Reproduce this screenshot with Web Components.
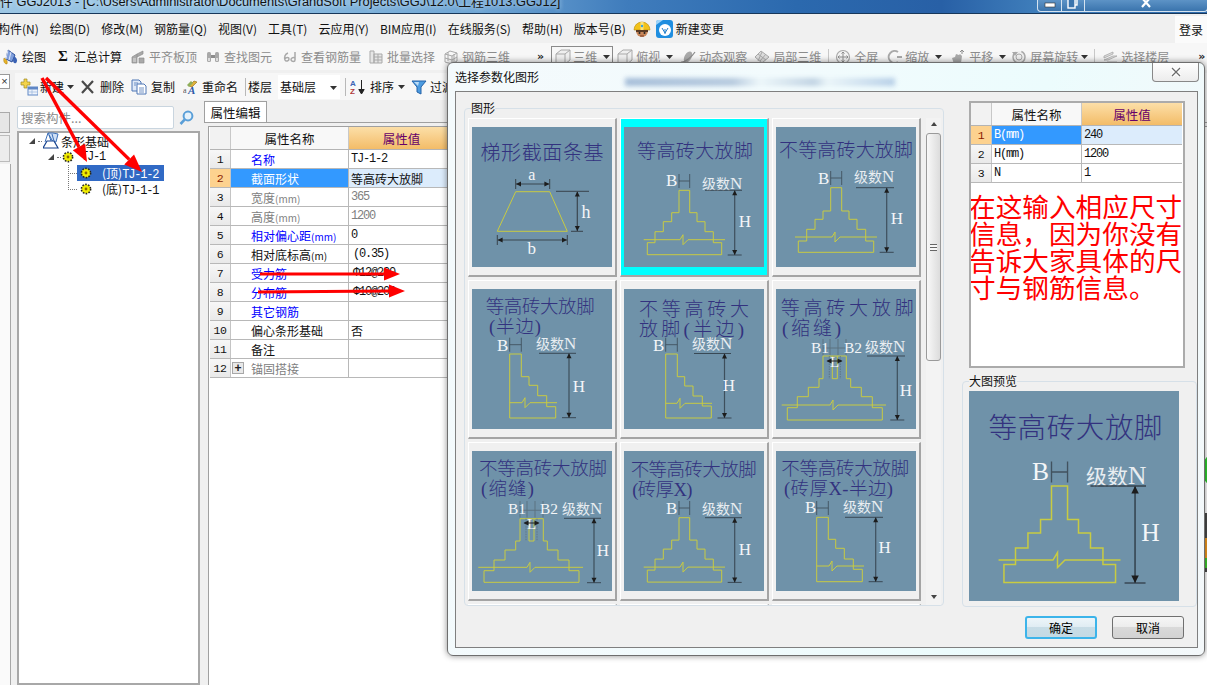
<!DOCTYPE html>
<html lang="zh"><head><meta charset="utf-8"><title>GGJ2013</title>
<style>
html,body{margin:0;padding:0;background:#fff}
body{width:1207px;height:685px;overflow:hidden;position:relative;display:flex;flex-direction:column;font:12px "Noto Sans CJK SC","Noto Sans",sans-serif;color:#111}
</style></head><body>
<gd-titlebar>件 GGJ2013 - [C:\Users\Administrator\Documents\GrandSoft Projects\GGJ\12.0\工程1013.GGJ12]</gd-titlebar>
<gd-menubar></gd-menubar>
<gd-toolbar1></gd-toolbar1>
<gd-workspace></gd-workspace>
<gd-annotations></gd-annotations>
<gd-dialog></gd-dialog>
<script>
const SANS='"Noto Sans CJK SC","Noto Sans",sans-serif';
const MONO='"Liberation Mono","Noto Sans CJK SC",monospace';
const SERIF='"Liberation Serif","Noto Sans CJK SC",serif';
const svg=(b,s=16)=>`<svg width="${s}" height="${s}" viewBox="0 0 16 16" aria-hidden="true">${b}</svg>`;
const G='#a9a9a9',GD='#8d8d8d';
const ICONS={
 draw:svg(`<path d="M5 1l7 5-3 7-6-3z" fill="#7f9fdc" stroke="#2c4f9a"/><path d="M5 1L3 10M8 3l-2 8" stroke="#dfe8fa" fill="none"/><path d="M11 7c3 2 4 5 2 7-2 1-3-1-3-3z" fill="#3a62b4"/><path d="M1 9c2 1 4 3 3 6-2 0-4-2-3-6z" fill="#e9b428" stroke="#a57a10" stroke-width=".5"/>`),
 level:svg(`<path d="M2 8l5-3v9H2zM7 5l6-3v3l-6 3M9 9h5v5H9z" fill="${G}" stroke="${GD}" stroke-width=".7"/><path d="M3 10h3M3 12h3" stroke="#ddd"/>`),
 find:svg(`<rect x="2" y="3" width="4" height="10" rx="1.5" fill="${G}"/><rect x="10" y="3" width="4" height="10" rx="1.5" fill="${G}"/><rect x="6" y="6" width="4" height="3" fill="${GD}"/><rect x="3" y="9" width="2" height="3" fill="#ddd"/><rect x="11" y="9" width="2" height="3" fill="#ddd"/>`),
 rebar:svg(`<path d="M6 4C3 5 2 8 3 11c1 2 4 1 4-1s-3-2-4 0M13 3v8c0 2-3 2-4 0 0-2 2-3 4-2" fill="none" stroke="${G}" stroke-width="1.5"/>`),
 batch:svg(`<path d="M2 2h4v12H2zM6 5h8v9H6zM6 8h8M6 11h8M10 5v9" fill="#e6e6e6" stroke="${G}"/>`),
 bar3d:svg(`<path d="M2 5l5-3 7 2v8l-5 3-7-2zM2 5l7 2v8M9 7l5-3M5 3v9M11 5v9M2 9l7 2 5-3" fill="none" stroke="${G}"/>`),
 cube:svg(`<path d="M1 5l5-4h9v10l-5 4H1zM1 5h9v10M10 5l5-4" fill="#efefef" stroke="${G}"/>`),
 orbit:svg(`<ellipse cx="8" cy="8" rx="3.5" ry="6" fill="${G}" transform="rotate(30 8 8)"/><path d="M1 13c3 1 11-5 14-10" fill="none" stroke="${GD}" stroke-width="1.2"/>`),
 local:svg(`<path d="M1 8l6-6 8 6-7 6zM4 5l8 6M8 3l-4 9M12 5l-6 7" fill="#dcdcdc" stroke="${G}"/>`),
 full:svg(`<circle cx="8" cy="8" r="6.5" fill="#f4f4f4" stroke="${G}" stroke-width="1.2"/><path d="M8 3v10M3 8h10M6.5 4.5L8 3l1.5 1.5M6.5 11.5L8 13l1.5-1.5M4.5 6.5L3 8l1.5 1.5M11.5 6.5L13 8l-1.5 1.5" fill="none" stroke="${GD}"/>`),
 zoom:svg(`<path d="M12 3a6 6 0 1 0 0 10" fill="none" stroke="${G}" stroke-width="2"/><path d="M11 8h5" stroke="${GD}" stroke-width="1.5"/>`),
 hand:svg(`<path d="M4 15l-2-6 3-1 1-3 3 1 1-1 2 2-1 7z" fill="${G}"/><path d="M10 3l2-2 2 2M12 1v4" fill="none" stroke="${GD}"/>`),
 rotate:svg(`<circle cx="8" cy="8" r="6" fill="#eee" stroke="${G}" stroke-width="1.5" stroke-dasharray="24 6"/><circle cx="8" cy="8" r="3" fill="none" stroke="${G}"/><path d="M1 3l3 4 3-4z" fill="${G}"/>`),
 floor:svg(`<path d="M2 7l9-4v2l-9 4zM2 11l9-4h4l-9 4zM5 13h10" fill="#dedede" stroke="${G}" stroke-width=".8"/>`),
 add:svg(`<path d="M4 0h3v3h3v3H7v3H4V6H1V3h3z" fill="#f4d34a" stroke="#9d8a23" stroke-width=".7"/><rect x="8" y="8" width="10" height="8" fill="#eef3fb" stroke="#5f87c6"/><rect x="8" y="8" width="10" height="2.5" fill="#5f87c6"/><path d="M8 13h10M12 10v6" stroke="#9ab5dc" stroke-width=".7"/>`,18).replace('0 0 16 16','0 0 18 16'),
 del:svg(`<path d="M2 2l11 12M13 2L2 14" stroke="#4a4a4a" stroke-width="2.2" fill="none"/>`),
 copy:svg(`<path d="M1 1h7l2 2v9H1z" fill="#dfe9f7" stroke="#4e76b5"/><path d="M6 5h7l2 2v8H6z" fill="#fff" stroke="#4e76b5"/><path d="M3 4h4M3 6h2M8 9h5M8 11h5M8 13h5" stroke="#4e76b5" stroke-width=".8"/>`),
 ren:svg(`<path d="M6 7l5-5 3 1-5 5z" fill="#e0b23a" stroke="#8a6a14" stroke-width=".6"/><path d="M4 6l4-4 2 2-4 4z" fill="#8fae5b"/><text x="0" y="14" font-size="8" font-family="Liberation Serif" fill="#555">a</text><text x="5" y="15" font-size="11" font-weight="700" font-style="italic" font-family="Liberation Serif" fill="#2f5aa8">A</text>`),
 sort:svg(`<text x="0" y="7" font-size="8" font-weight="700" font-family="Liberation Sans" fill="#3c64b4">A</text><text x="0" y="15" font-size="8" font-weight="700" font-family="Liberation Sans" fill="#b03a3a">Z</text><path d="M11.5 1v12M8.8 10.5l2.7 4.5 2.7-4.5z" fill="#222" stroke="#222"/>`),
 filter:svg(`<path d="M1 2h14L10 8v7l-4-2V8z" fill="#4c9be0" stroke="#2462a8"/><path d="M3 3h5L7 7z" fill="#bcdcf6"/>`)
};
function comp(name,css,render){customElements.define(name,class extends HTMLElement{
 connectedCallback(){if(this.shadowRoot)return;const s=this.attachShadow({mode:'open'});s.innerHTML=`<style>${css}</style>`+render(this);}
});}
const caret=`<svg width="7" height="4" viewBox="0 0 7 4" aria-hidden="true"><path d="M0 0h7L3.5 4z" fill="#333"/></svg>`;

comp('gd-titlebar',`:host{display:flex;height:14px;overflow:hidden;flex:none;box-sizing:border-box;border-bottom:1px solid #17375a;background:linear-gradient(90deg,#9cc6e4 0,#8dbde0 20%,#6fa5d4 40%,#3f7cbc 52%,#2b69ae 66%,#2860a6 78%,#3f7ebb 86%,#2f6cad 100%);justify-content:space-between}
.t{font:12.85px "Liberation Sans","Noto Sans CJK SC",sans-serif;color:#111;white-space:nowrap;line-height:14px;margin-top:-5px;text-shadow:0 0 4px #dff0fb}
.b{display:flex;width:171px;height:12px;border:1px solid #d5e3f0;border-top:0;border-radius:0 0 4px 4px;margin-right:-1px;box-sizing:border-box;background:linear-gradient(#5d93c6,#3a74ad);align-items:flex-start}
.b div{height:11px;border-right:1px solid #d5e3f0;display:flex;justify-content:center;overflow:hidden}
.min{width:23px}.max{width:22px}.cl{flex:1;border:0!important}`,()=>`<span class="t"><slot></slot></span><div class="b"><div class="min"><svg width="12" height="10" aria-hidden="true"><rect x="1" y="3" width="10" height="4" fill="#fff" stroke="#333" stroke-width=".6"/></svg></div><div class="max"><svg width="12" height="10" aria-hidden="true"><rect x="3" y="-3" width="7" height="8" fill="none" stroke="#fff" stroke-width="1.4"/><rect x="1" y="-1" width="7" height="9" fill="#3a74ad" stroke="#fff" stroke-width="1.4"/></svg></div><div class="cl"><svg width="12" height="10" aria-hidden="true"><path d="M2-2l8 9M10-2L2 7" stroke="#fff" stroke-width="2.2"/></svg></div></div>`);

comp('gd-menubar',`:host{display:flex;flex:none;height:29px;background:#f0f0f0;align-items:center;white-space:nowrap;font-size:12px;color:#111;position:relative}
.i{margin-left:11px}.i.f{margin-left:-2px}.g{flex:1}
.login{background:#fbfbfb;height:27px;width:32px;align-self:flex-end;display:flex;align-items:center;justify-content:center;font-size:12px}
svg{display:block}`,()=>{
 const m=['构件(N)','绘图(D)','修改(M)','钢筋量(Q)','视图(V)','工具(T)','云应用(Y)','BIM应用(I)','在线服务(S)','帮助(H)','版本号(B)'];
 return m.map((t,i)=>`<span class="i${i?'':' f'}">${t}</span>`).join('')+
 `<svg style="margin-left:7px" width="18" height="18" viewBox="0 0 18 18" aria-hidden="true"><circle cx="9" cy="11" r="6" fill="#c9875a"/><path d="M1 10a8 8 0 0 1 16 0z" fill="#f2c21a" stroke="#b98a08" stroke-width=".6"/><rect x="7.5" y="2" width="3" height="8" fill="#fbe278"/><circle cx="9" cy="6" r="1.2" fill="#3aa0e0"/><path d="M3 10h12v2H3z" fill="#5a3a24"/><circle cx="6.5" cy="13" r="1" fill="#222"/><circle cx="11.5" cy="13" r="1" fill="#222"/><path d="M7 16h4" stroke="#7a3a24"/></svg>
 <svg style="margin-left:5px" width="17" height="18" viewBox="0 0 17 18" aria-hidden="true"><rect x="0" y="0" width="17" height="18" rx="3" fill="#1f8ee0"/><circle cx="9" cy="10" r="6" fill="#fff"/><path d="M0 5l7-5H2a2 2 0 0 0-2 2z" fill="#9fd4f8"/><path d="M6 8l3 5 3-5M9 9v5" stroke="#1f7cc8" fill="none"/></svg>
 <span style="margin-left:3px">新建变更</span><span class="g"></span><span class="login">登录</span>`;
});

comp('gd-tool',`:host{display:inline-flex;align-items:center;gap:3px;white-space:nowrap;height:18px;flex:none}
:host([disabled]){color:#8c8c8c}
svg{display:block;flex:none}.c{margin-left:var(--cm,3px)}.sum{font:700 15px "Liberation Serif",serif;width:16px;text-align:center}`,h=>{
 const ic=h.getAttribute('icon');
 const icon=ic==='sum'?`<span class="sum">Σ</span>`:(ICONS[ic]||'');
 return icon+`<span>${h.getAttribute('label')||''}</span>`+(h.hasAttribute('caret')?`<span class="c">${caret}</span>`:'');
});

comp('gd-toolbar1',`:host{display:block;flex:none;background:#f7f7f7;font-size:12px;border-bottom:3px solid #f0f0f0;height:27px}
.r{display:flex;align-items:center;height:27px;padding-left:3px;white-space:nowrap}
.more{font:700 11px "DejaVu Sans",sans-serif;color:#222}
.sep{width:1px;height:16px;background:#c8c8c8;flex:none}
.box{width:62px;height:22px;border:1px solid #8a8a8a;box-sizing:border-box;display:flex;align-items:center;gap:2px;padding-left:3px;flex:none;color:#8c8c8c;position:relative}
.box svg{display:block}
.box .k{position:absolute;right:2px;top:8px}`,()=>`<div class="r">
<gd-tool icon="draw" label="绘图"></gd-tool>
<gd-tool icon="sum" label="汇总计算" style="margin-left:9px"></gd-tool>
<gd-tool icon="level" label="平齐板顶" disabled style="margin-left:8px"></gd-tool>
<gd-tool icon="find" label="查找图元" disabled style="margin-left:8px"></gd-tool>
<gd-tool icon="rebar" label="查看钢筋量" disabled style="margin-left:10px"></gd-tool>
<gd-tool icon="batch" label="批量选择" disabled style="margin-left:7px"></gd-tool>
<gd-tool icon="bar3d" label="钢筋三维" disabled style="margin-left:8px"></gd-tool>
<span class="more" style="margin-left:27px">»</span>
<span class="box" style="margin-left:7px">${ICONS.cube}<span>三维</span><span class="k">${caret}</span></span>
<gd-tool icon="cube" label="俯视" caret disabled style="margin-left:4px"></gd-tool>
<gd-tool icon="orbit" label="动态观察" disabled style="margin-left:7px"></gd-tool>
<gd-tool icon="local" label="局部三维" disabled style="margin-left:7px"></gd-tool>
<span class="sep" style="margin-left:7px"></span>
<gd-tool icon="full" label="全屏" disabled style="margin-left:6px"></gd-tool>
<gd-tool icon="zoom" label="缩放" caret disabled style="margin-left:8px"></gd-tool>
<gd-tool icon="hand" label="平移" caret disabled style="margin-left:8px"></gd-tool>
<gd-tool icon="rotate" label="屏幕旋转" caret disabled style="margin-left:5px;--cm:0"></gd-tool>
<span class="sep" style="margin-left:6px"></span>
<gd-tool icon="floor" label="选择楼层" disabled style="margin-left:7px"></gd-tool>
<span class="more" style="margin-left:29px">»</span></div>`);

comp('gd-toolbar2',`:host{display:flex;flex:none;height:27px;align-items:center;background:#f7f7f7;padding-left:5px;white-space:nowrap;font-size:12px}
.sep{width:1px;height:18px;background:#b8b8b8;flex:none}
.sel{background:#fff;width:62px;height:24px;display:flex;align-items:center;padding-left:2px;box-sizing:border-box;position:relative;flex:none}
.sel i{position:absolute;right:3px;top:10px;display:block;line-height:0}`,()=>`
<gd-tool icon="add" label="新建" caret style="gap:2px;--cm:1px"></gd-tool>
<gd-tool icon="del" label="删除" style="margin-left:6px;gap:4px"></gd-tool>
<gd-tool icon="copy" label="复制" style="margin-left:7px;gap:4px"></gd-tool>
<gd-tool icon="ren" label="重命名" style="margin-left:8px"></gd-tool>
<span class="sep" style="margin-left:7px"></span><span style="margin-left:2px">楼层</span>
<span class="sel" style="margin-left:6px">基础层<i>${caret}</i></span>
<span class="sep" style="margin-left:5px"></span>
<gd-tool icon="sort" label="排序" caret style="margin-left:4px;gap:4px;--cm:0"></gd-tool>
<gd-tool icon="filter" label="过滤" style="margin-left:6px"></gd-tool>`);

comp('gd-tree',`:host{display:block;flex:1;background:#fff;border:2px solid #a8a8a8;box-sizing:border-box;width:183px;margin-top:2px;font-size:12px;color:#111}
.r{display:flex;align-items:center;height:16px;white-space:nowrap}
.ex{width:0;height:0;border-style:solid;border-width:0 0 6px 6px;border-color:transparent transparent #444 transparent;flex:none}
.d{border-top:1px dotted #777;width:4px;flex:none;margin:0 1px 0 3px}
svg{display:block;flex:none}
.m{font-family:${MONO};font-size:12px;letter-spacing:-1.2px}
.hl{background:#316ac5;color:#fff;display:flex;align-items:center;height:16px;width:87px;flex:none;padding-left:3px;box-sizing:border-box}
.nh{display:flex;align-items:center;height:16px;padding-left:3px}
.c1{width:8px;height:8px;border-left:1px dotted #777;border-bottom:1px dotted #777;margin-left:49px;margin-top:-8px;flex:none}
.c2{width:8px;height:24px;border-left:1px dotted #777;border-bottom:1px dotted #777;margin-left:49px;margin-top:-24px;flex:none}
.s{margin-left:10px}`,()=>{
 const gear=`<svg width="12" height="12" viewBox="0 0 12 12" aria-hidden="true"><circle cx="6" cy="6" r="4.6" fill="#f2ee00" stroke="#222" stroke-width="1.6" stroke-dasharray="1.6 1.3"/><circle cx="6" cy="6" r="1.4" fill="#8a6a00"/></svg>`;
 const found=`<svg width="16" height="18" viewBox="0 0 16 18" aria-hidden="true"><path d="M5 1h5l5 1-2 8-3 0zM5 1L2 10" fill="#cfe0f6" stroke="#3c6fb8"/><path d="M4 9h7l4 7H0z" fill="#fff" stroke="#123f8c" stroke-width="1.2"/><path d="M6 3l2 6M9 2l2 7" stroke="#3c6fb8"/></svg>`;
 return `<div class="r" style="padding-left:10px"><i class="ex"></i><i class="d"></i>${found}<span style="margin-left:2px">条形基础</span></div>
 <div class="r" style="padding-left:29px"><i class="ex"></i><i class="d"></i>${gear}<span class="m" style="margin-left:7px">TJ-1</span></div>
 <div class="r"><i class="c1"></i><span class="hl">${gear}<span class="s">(顶)<span class="m">TJ-1-2</span></span></span></div>
 <div class="r"><i class="c2"></i><span class="nh">${gear}<span class="s">(底)<span class="m">TJ-1-1</span></span></span></div>`;
});

comp('gd-side',`:host{display:flex;flex-direction:column;width:189px;flex:none;padding-left:2px;box-sizing:border-box}
.s{display:flex;align-items:center;margin-top:6px;height:23px;flex:none}
.b{width:157px;height:23px;box-sizing:border-box;border:1px solid #c9d5df;border-radius:2px;background:#fff;color:#8a8a8a;display:flex;align-items:center;padding-left:3px;font-size:12.5px}
svg{display:block;margin-left:5px}`,()=>`<div class="s"><div class="b">搜索构件...</div><svg width="15" height="16" viewBox="0 0 15 16" aria-hidden="true"><circle cx="9" cy="6" r="4.4" fill="#e6f2fb" stroke="#5a9fd8" stroke-width="2"/><path d="M5.6 9.6L1.5 14" stroke="#5a9fd8" stroke-width="2.6"/></svg></div><gd-tree></gd-tree>`);

comp('gd-grid',`:host{display:block;background:#fff;font-size:12px}
.h{display:grid;grid-template-columns:var(--cols);height:var(--hh,23px);border-bottom:1px solid #b4b4b4;box-sizing:border-box}
.h>div{display:flex;align-items:center;justify-content:center;background:#f8f8f8;border-right:1px solid #c8c8c8;font-size:12.5px}
.h>div:first-child{background:#f2f2f2}
.h>.v{background:linear-gradient(#fcdfa8,#f3bc68);color:#66006a;border:0}`,h=>`<div class="h"><div></div><div>属性名称</div><div class="v">属性值</div></div><slot></slot>`);

comp('gd-row',`:host{display:grid;grid-template-columns:var(--cols);height:19px;box-sizing:border-box;border-bottom:1px solid #b8b8b8;font-size:12px;white-space:nowrap;color:#111}
div{display:flex;align-items:center;overflow:hidden}
.n{justify-content:center;background:linear-gradient(#f7f7f7,#e9e9e9);border-right:1px solid #c4c4c4;font:11.5px ${MONO};letter-spacing:-.4px}
.a{border-right:1px solid #b8b8b8;padding-left:var(--pad,20px);position:relative}
.v{padding-left:var(--vp,2px)}
.m{font-family:${MONO};font-size:12px;letter-spacing:-1.2px}
.u{font-size:10px}
:host([sel]) .n{background:#fdd28f;color:#8a1a00}
:host([sel]) .a{background:#3399ff;color:#fff}
:host([sel]) .v{background:#dcecfc}
:host([kind=blue]) .a{color:#0000ff}
:host([kind=gray]) .a,:host([kind=gray]) .v{color:#808080}
.p{position:absolute;left:1px;top:3px;width:12px;height:12px;box-sizing:border-box;border:1px solid #a8a8a8;background:#e8e8e8;font:700 12px/10px "Liberation Sans",sans-serif;text-align:center;color:#222;display:block}`,h=>{
 const a=h.getAttribute('name')||'',v=h.getAttribute('value')||'';
 const cls=s=>/[\u4e00-\u9fff]/.test(s)?'':'m';
 const mono=h.hasAttribute('mono');
 const an=mono?a:a.replace(/(\(.*\))/,'<span class="u">$1</span>');
 return `<div class="n">${h.getAttribute('n')}</div><div class="a">${h.hasAttribute('plus')?'<span class="p">+</span>':''}<span class="${mono?'m':''}">${an}</span></div><div class="v"><span class="${cls(v)}">${v}</span></div>`;
});

comp('gd-props',`:host{display:flex;flex-direction:column;flex:1;min-width:0}
.tab{height:21px;flex:none;border-bottom:1px solid #a0a0a0;margin-top:1px;display:flex}
.tab span{width:63px;background:#fff;border:1px solid #a0a0a0;border-bottom:0;box-sizing:border-box;height:21px;display:flex;align-items:center;justify-content:center;font-size:12.5px}
.body{flex:1;margin-top:3px;margin-left:4px;border-left:1px solid #a0a0a0;border-top:1px solid #a0a0a0;background:#fff;padding-left:1px}
gd-grid{--cols:21px 118px 1fr;width:244px}`,()=>`<div class="tab"><span>属性编辑</span></div><div class="body"><gd-grid><slot></slot></gd-grid></div>`);

comp('gd-workspace',`:host{display:flex;flex:1;min-height:0;background:#f0f0f0}
.strip{width:15px;flex:none;position:relative;background:#f0f0f0;display:flex;flex-direction:column}
.x{width:10px;height:15px;margin-top:1px;border:1px solid #9a9a9a;border-left:0;box-sizing:border-box;background:#fff;font:11px/13px "Liberation Sans",sans-serif;text-align:center;color:#333}
.t1{width:10px;height:21px;margin-top:23px;background:#e6e6e6;border:1px solid #aaa;border-left:0;box-sizing:border-box}
.t2{width:10px;height:27px;margin-top:2px;background:#ececec;border:1px solid #bbb;border-left:0;box-sizing:border-box}
.t3{width:11px;flex:1;border-right:1px solid #a8a8a8;box-sizing:border-box;background:#fafafa;margin-top:2px}
.m{flex:1;display:flex;flex-direction:column;min-width:0}
.p{display:flex;flex:1;min-height:0}`,()=>`<div class="strip"><div class="x">×</div><div class="t1"></div><div class="t2"></div><div class="t3"></div></div><div class="m"><gd-toolbar2></gd-toolbar2><div class="p"><gd-side></gd-side><gd-props>
<gd-row n="1" name="名称" value="TJ-1-2" kind="blue"></gd-row>
<gd-row n="2" name="截面形状" value="等高砖大放脚" sel></gd-row>
<gd-row n="3" name="宽度(mm)" value="365" kind="gray"></gd-row>
<gd-row n="4" name="高度(mm)" value="1200" kind="gray"></gd-row>
<gd-row n="5" name="相对偏心距(mm)" value="0" kind="blue"></gd-row>
<gd-row n="6" name="相对底标高(m)" value="(0.35)" style="--vp:4px"></gd-row>
<gd-row n="7" name="受力筋" value="Φ12@200" kind="blue" style="--vp:4px"></gd-row>
<gd-row n="8" name="分布筋" value="Φ10@200" kind="blue" style="--vp:4px"></gd-row>
<gd-row n="9" name="其它钢筋" value="" kind="blue"></gd-row>
<gd-row n="10" name="偏心条形基础" value="否"></gd-row>
<gd-row n="11" name="备注" value=""></gd-row>
<gd-row n="12" name="锚固搭接" value="" kind="gray" plus></gd-row>
</gd-props></div></div>`);

comp('gd-annotations',`:host{position:absolute;left:0;top:0;width:1207px;height:685px;pointer-events:none;display:block}
svg{position:absolute;left:0;top:0}`,()=>{
 const arrow=(x1,y1,x2,y2,w,hl,hw)=>{const a=Math.atan2(y2-y1,x2-x1),c=Math.cos(a),s=Math.sin(a),bx=x2-hl*c,by=y2-hl*s;
  return `<line x1="${x1}" y1="${y1}" x2="${bx}" y2="${by}" stroke="#ff0000" stroke-width="${w}"/><polygon fill="#ff0000" points="${x2},${y2} ${bx-hw*s},${by+hw*c} ${bx+hw*s},${by-hw*c}"/>`};
 return `<svg width="1207" height="685" aria-hidden="true">${arrow(42,78,87,162,3.4,17,7)}${arrow(46,78,142,172,3.4,18,7)}${arrow(260,274,400,274,3,16,6.5)}${arrow(258,292,405,291,3,16,6.5)}
 <circle cx="1222" cy="470" r="20" fill="#2fcf30"/>
 <rect x="1201" y="513" width="12" height="59" rx="3" fill="#4a4a4a"/><rect x="1204" y="538" width="4" height="20" fill="#f09a20"/><rect x="1204" y="558" width="4" height="10" fill="#3fc92e"/></svg>`;
});

/* drawings */
const sym=(st,bot,dy=0)=>{const L=[],R=[];st.forEach((s,i)=>{L.push([s[0],s[2]]);L.push([s[0],st[i+1]?st[i+1][2]:bot]);R.push([s[1],s[2]]);R.push([s[1],st[i+1]?st[i+1][2]:bot]);});
 const pts=[...L,...R.reverse()];return pts.map(p=>p[0]+','+(p[1]+dy)).join(' ');};
const half=(xl,st,bot)=>{const p=[[xl,st[0][1]]];st.forEach((s,i)=>{p.push([s[0],s[1]]);p.push([s[0],st[i+1]?st[i+1][1]:bot]);});p.push([xl,bot]);return p.map(q=>q.join(',')).join(' ');};
const EQ=[[55,65.7,63.3],[47.7,73,85.7],[39.3,81,94.7],[31,89.3,104.7],[23.3,97.7,115.7]];
const CFG={
 trap:{title:[['梯形截面条基',8.5,123,33,20]],trap:1},
 eq:{title:[['等高砖大放脚',13,116,31,19]],o:sym(EQ,127.7),br:[112.7,19.7,101,55],b:[55,65.7,47,61,42,59],n:[78,62,81,118,63.3],h:[110.7,63.3,128,121,100]},
 neq:{title:[['不等高砖大放脚',3,134,30,19]],o:sym([[54.7,65.7,60.7],[47,73,84],[39,81,92.3],[30.7,89.7,102.3],[22.3,97.7,114]],125.3),br:[110,19,101,55],b:[54.7,65.7,44,58,42,57],n:[78,55,80,118,60.7],h:[110.7,60.7,125.3,121,97]},
 h1:{title:[['等高砖大放脚',13.7,109,24,18.5],['(半边)',17,52,44,18.5]],o:half(37.7,[[49.3,65],[57,87.7],[65.7,96.3],[74.7,106.7],[83.7,117.7]],129),br:[113.7,37.7,85,49],b:[37.7,49.3,48.7,62.7,25,62],n:[64,60,67,104,64.3],h:[97,64.3,128.7,107,103]},
 h2:{title:[['不等高砖大',15,110,27,19],['放脚(半边)',15,105,47,19]],o:half(41.7,[[53.3,65],[60.7,87.7],[69,97],[78.3,107],[87.3,117]],129),br:[114.3,41.7,88,52],b:[41.7,53.3,48.7,62.7,29,62],n:[68,60,70,107,64.5],h:[100.5,64.5,129,105,102]},
 s1:{title:[['等高砖大放脚',4.7,133,26,19],['(缩缝)',6,59,46,19]],o:sym([[47,70.3,67],[43,74.7,89.7],[32.3,85.3,98.3],[21.3,96.3,107.7],[11.3,106.3,118.7]],131),sl:[56.3,61.3,67,89.7],br:[116,5.7,110,53],bb:[47,54,62,70,50,66,35,64,68],n:[89,63,91,129,67],h:[121.3,67,131,130,107]},
 s2:{title:[['不等高砖大放脚',7,128,24,18.5],['(缩缝)',9,53,44,18.5]],o:sym([[48,71.3,67.7],[43.7,75.3,90],[33,86,99],[22,97,109],[12,107,119.7]],131.3),sl:[57,62,67.7,90],br:[116.3,6.3,111,54],bb:[48,55,63,71,50,66.5,36,63,68],n:[90,63,92,129,67.3],h:[122,67.3,131.7,131,105]},
 x1:{title:[['不等高砖大放脚',6.7,126,25,18.5],['(砖厚X)',8.3,60,45,18.5]],o:sym(EQ,127.7,3.4),br:[116.1,19.7,101,55],b:[55,65.7,50,64,42,63],n:[78,63,81,118,66.7],h:[110.7,66.7,131.4,121,104]},
 x2:{title:[['不等高砖大放脚',5.3,128,24,18.5],['(砖厚X-半边)',8,109,44,18.5]],o:half(40.7,[[52.3,66.3],[59.7,88.3],[68.3,97.3],[77.3,108],[86.3,118.3]],130.7),br:[115,40.7,88,52],b:[40.7,52.3,50,64,29,62],n:[67,61,69,107,66.3],h:[99.7,66.3,130.7,108.7,102]}
};
const DIM='#41525f',LT='#5a6f7e',Y='#c8cb42',W='#f4f6f8';
function drawShape(c){
 let s='';
 c.title.forEach(t=>{s+=`<text x="${t[1]}" y="${t[3]}" font-size="${t[4]}" textLength="${t[2]}" lengthAdjust="spacing" fill="#33327f" font-weight="300" font-family='${SERIF}'>${t[0]}</text>`});
 const lab=(x,y,t,fs,a='start')=>`<text x="${x}" y="${y}" font-size="${fs}" fill="${W}" text-anchor="${a}" font-family='${SERIF}'>${t}</text>`;
 const ah=(x,y,d)=>`<path d="M${x-2.5} ${y+d*5}L${x} ${y}L${x+2.5} ${y+d*5}z" fill="#1c1c1c"/>`;
 const ahh=(x,y,d)=>`<path d="M${x+d*5} ${y-2.5}L${x} ${y}L${x+d*5} ${y+2.5}z" fill="#1c1c1c"/>`;
 if(c.trap){
  s+=`<polygon points="43.7,64.7 77.7,64.7 95.3,104.3 25.3,104.3" fill="none" stroke="${Y}" stroke-width="1"/>`;
  s+=`<path d="M43.7 52v10M77.7 52v10M25.3 108v10M95.3 108v10M84 64.3h33M99 104.3h12" stroke="#2b2f33" stroke-width=".8" fill="none"/>`;
  s+=`<path d="M44 57h33M26 113h69M105.3 65v39" stroke="#3a4650" stroke-width="1.2" fill="none"/>`;
  s+=ahh(44,57,1)+ahh(77.4,57,-1)+ahh(25.6,113,1)+ahh(95,113,-1)+ah(105.3,64.5,1)+ah(105.3,104,-1);
  s+=lab(59.7,53,'a',16,'middle')+lab(114,90.7,'h',18,'middle')+lab(59.7,127,'b',17,'middle');
  return s;
 }
 s+=`<polygon points="${c.o}" fill="none" stroke="${Y}" stroke-width="1"/>`;
 if(c.sl){const[a,b,t,u]=c.sl;s+=`<path d="M${a} ${t}V${u}H${b}V${t}" fill="none" stroke="${Y}"/><path d="M${a-3} ${t}V${u}M${b+3} ${t}V${u}" stroke="${LT}" stroke-dasharray="1.5 1" stroke-width=".8"/>`}
 const[by,bx1,bx2,bz]=c.br;
 s+=`<path d="M${bx1} ${by}H${bz+1}L${bz+4} ${by-5}V${by+5}L${bz+9} ${by}H${bx2}" fill="none" stroke="${Y}" stroke-width="1"/>`;
 if(c.b){const[x1,x2,y1,y2,tx,ty]=c.b;s+=`<path d="M${x1} ${y1}V${y2}M${x2} ${y1}V${y2}M${x1} ${(y1+y2)/2}H${x2}" stroke="${DIM}" stroke-width=".9" fill="none"/>`+lab(tx,ty,'B',17)}
 if(c.bb){const[a,b,d,e,y1,y2,t1,ty,t2]=c.bb;s+=`<path d="M${a} ${y1}V${y2}M${b} ${y1}V${y2}M${d} ${y1}V${y2}M${e} ${y1}V${y2}M${a} ${(y1+y2)/2+1}H${e}" stroke="${LT}" stroke-width=".9" fill="none"/>`+lab(t1,ty,'B1',15.5)+lab(t2,ty,'B2',15.5);
  const m=(a+e)/2;s+=lab(m,78,'L',15,'middle')+`<path d="M${m-7} 72H${m+7}" stroke="#222"/>`+ahh(m-8,72,1)+ahh(m+8,72,-1);}
 const[nx,ny,l1,l2,ly]=c.n;s+=`<text x="${nx}" y="${ny}" font-size="14" fill="#e8edf1" font-family='${SERIF}'>级数<tspan font-size="17">N</tspan></text><path d="M${l1} ${ly}H${l2}" stroke="#33414c" stroke-width=".9"/>`;
 const[hx,h1,h2,tx,ty]=c.h;s+=`<path d="M${hx} ${h1}V${h2}" stroke="#3d4f5c" stroke-width="1.2"/><path d="M${hx-7} ${h2}H${hx+7}" stroke="#33414c" stroke-width=".9"/>`+ah(hx,h1,1)+ah(hx,h2,-1)+lab(tx,ty,'H',17,'middle');
 return s;
}
comp('gd-shape',`:host{display:block;width:140px;height:140px;background:#6f92a9}
:host([big]){width:210px;height:210px}
svg{display:block;width:100%;height:100%}`,h=>`<svg viewBox="0 0 140 140">${drawShape(CFG[h.getAttribute('kind')])}</svg>`);

comp('gd-cell',`:host{display:block;width:149px;height:159px;box-sizing:border-box;border:1px solid #fff;border-right:2px solid #a4a4a4;border-bottom:2px solid #a4a4a4;padding:8px 0 0 3px;background:#f0f0f0}
:host([sel]){background:#00ffff}`,()=>`<slot></slot>`);

comp('gd-group',`:host{display:block;position:relative;box-sizing:border-box;border:1px solid #d6e0e8;border-radius:4px}
.l{position:absolute;left:6px;top:-9px;background:#f0f0f0;font-size:12px;line-height:16px}`,h=>`<span class="l">${h.getAttribute('label')}</span><slot></slot>`);

comp('gd-scrollbar',`:host{display:flex;flex-direction:column;align-items:center;width:15px;flex:none;margin-left:2px;height:487px;background:#f3f3f3}
.a{width:0;height:0;border:3.5px solid transparent;flex:none}
.u{border-bottom:4px solid #444;border-top:0;margin-top:4px}
.d{border-top:4px solid #444;border-bottom:0;margin-top:auto;margin-bottom:6px}
.t{width:15px;height:228px;margin-top:7px;box-sizing:border-box;border:1px solid #9a9a9a;border-radius:3px;background:linear-gradient(90deg,#f8f8f8,#dcdcdc);display:flex;align-items:center;justify-content:center}
.g{width:7px;height:7px;border-top:1px solid #666;border-bottom:1px solid #666;box-sizing:border-box;background:linear-gradient(#f8f8f8 0 2px,#666 2px 3px,#f8f8f8 3px)}`,()=>`<i class="a u"></i><div class="t"><i class="g"></i></div><i class="a d"></i>`);

comp('gd-button',`:host{display:flex;align-items:center;justify-content:center;width:72px;height:23px;box-sizing:border-box;border:1px solid #707070;border-radius:3px;background:linear-gradient(#f6f6f6 0,#ececec 49%,#d9d9d9 50%,#d2d2d2 100%);font-size:12px;color:#000}
:host([primary]){border:2px solid #3cb4ea;background:linear-gradient(#edf5f9 0,#dfecf3 49%,#c7dce6 50%,#c4dae4 100%)}`,()=>`<slot></slot>`);

comp('gd-dialog',`:host{position:absolute;left:447px;top:62px;width:758px;height:594px;box-sizing:border-box;display:flex;flex-direction:column;border:1px solid #6e6e6e;border-radius:6px;background:linear-gradient(100deg,#f4fafc 0,#f2fbfd 40%,#ecfcfd 70%,#f4f8fa 100%);box-shadow:0 0 6px rgba(0,0,0,.45);overflow:hidden;padding:0 6px 7px 7px}
.tb{height:28px;flex:none;display:flex;align-items:center;justify-content:space-between;position:relative}
.ti{font-size:12px;color:#111;margin-top:-2px}
.blur{position:absolute;left:170px;top:15px;width:270px;height:8px;filter:blur(2.5px);background:linear-gradient(90deg,#6f93c0 0,#8aa6c8 40%,#e9f4f8 50%,#9db6d0 70%,#e6f1f6 75%,#8fb0d8 100%);opacity:.6}
.cl{position:absolute;right:-1px;top:-1px;width:47px;height:20px;box-sizing:border-box;border:1px solid #888;border-top:0;border-radius:0 0 4px 4px;background:linear-gradient(#fff,#ececec);display:flex;align-items:center;justify-content:center}
.p{flex:1;min-height:0;border:1px solid #7f7f7f;background:#f0f0f0;display:flex;flex-direction:column}
.main{display:flex;flex:none;height:514px}
.g1{width:480px;height:498px;margin:16px 0 0 8px;flex:none}
.sc{display:flex;margin:9px 0 0 3px}
.gridw{width:456px;height:487px;overflow:hidden;flex:none}
.grid{display:grid;grid-template-columns:repeat(3,149px);column-gap:3px;row-gap:3px}
.r{margin-left:18px;width:235px;flex:none;display:flex;flex-direction:column}
.tbl{margin:9px 0 0 7px;width:216px;height:267px;box-sizing:border-box;border:2px solid #ababab;background:#fff;flex:none;overflow:hidden}
gd-grid{--cols:21px 90px 1fr;--hh:23px;--pad:2px;margin-right:1px}
.red{color:#ff0000;font-size:26.67px;line-height:27px;width:216px;margin:9px 0 0 -2px;word-break:break-all;font-family:"Noto Sans CJK SC",sans-serif;font-weight:400}
.g2{margin-top:13px;height:226px;width:235px;flex:none;padding:9px 0 0 6px}
.btn{display:flex;justify-content:flex-end;gap:15px;padding:10px 13px 0 0}`,()=>`
<div class="tb"><span class="ti">选择参数化图形</span><i class="blur"></i><span class="cl"><svg width="12" height="12" viewBox="0 0 12 12" aria-hidden="true"><path d="M2 2l8 8M10 2l-8 8" stroke="#fff" stroke-width="3.4"/><path d="M2 2l8 8M10 2l-8 8" stroke="#6a6a6a" stroke-width="1.2"/></svg></span></div>
<div class="p"><div class="main">
 <gd-group class="g1" label="图形"><div class="sc"><div class="gridw"><div class="grid">
  <gd-cell><gd-shape kind="trap"></gd-shape></gd-cell>
  <gd-cell sel><gd-shape kind="eq"></gd-shape></gd-cell>
  <gd-cell><gd-shape kind="neq"></gd-shape></gd-cell>
  <gd-cell><gd-shape kind="h1"></gd-shape></gd-cell>
  <gd-cell><gd-shape kind="h2"></gd-shape></gd-cell>
  <gd-cell><gd-shape kind="s1"></gd-shape></gd-cell>
  <gd-cell><gd-shape kind="s2"></gd-shape></gd-cell>
  <gd-cell><gd-shape kind="x1"></gd-shape></gd-cell>
  <gd-cell><gd-shape kind="x2"></gd-shape></gd-cell>
  <gd-cell></gd-cell><gd-cell></gd-cell><gd-cell></gd-cell>
 </div></div><gd-scrollbar></gd-scrollbar></div></gd-group>
 <div class="r">
  <div class="tbl"><gd-grid>
   <gd-row n="1" name="B(mm)" value="240" sel mono></gd-row>
   <gd-row n="2" name="H(mm)" value="1200" mono></gd-row>
   <gd-row n="3" name="N" value="1" mono></gd-row>
  </gd-grid><div class="red">在这输入相应尺寸信息，因为你没有告诉大家具体的尺寸与钢筋信息。</div></div>
  <gd-group class="g2" label="大图预览"><gd-shape kind="eq" big></gd-shape></gd-group>
 </div></div>
 <div class="btn"><gd-button primary>确定</gd-button><gd-button>取消</gd-button></div>
</div>`);
</script>
</body></html>
